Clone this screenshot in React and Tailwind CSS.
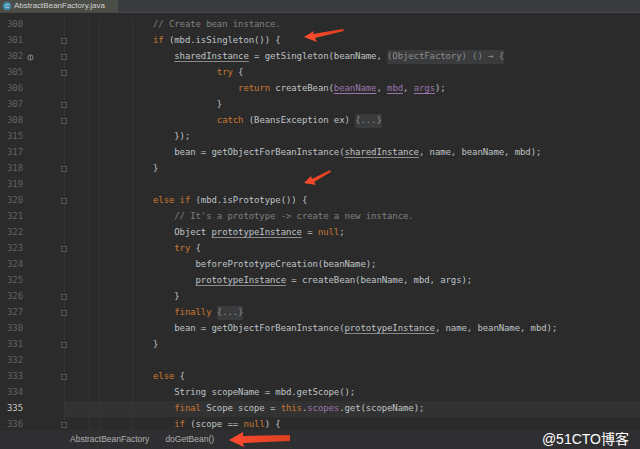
import React from 'react';

const K = 'text-[#cc7832]';
const C = 'text-[#808080]';
const P = 'text-[#9876aa]';

// segment helpers: [text, className]
const t = (s) => [s, ''];
const kw = (s) => [s, K];
const cm = (s) => [s, C];
const ul = (s) => [s, 'underline decoration-[#8a8a8a] underline-offset-2'];
const cap = (s) => [s, P + ' underline decoration-[#9876aa] underline-offset-2'];
const fold = (s) => [s, 'bg-[#3a3b3c] text-[#8c8c8c] rounded-[1px]'];

const lines = [
  { n: 300, ind: 0, segs: [cm('// Create bean instance.')] },
  { n: 301, ind: 0, fold: true, segs: [kw('if'), t(' (mbd.isSingleton()) {')] },
  { n: 302, ind: 4, fold: true, mark: true, segs: [ul('sharedInstance'), t(' = getSingleton(beanName, '), fold('(ObjectFactory) () → {')] },
  { n: 305, ind: 12, fold: true, segs: [kw('try'), t(' {')] },
  { n: 306, ind: 16, segs: [kw('return'), t(' createBean('), cap('beanName'), t(', '), cap('mbd'), t(', '), cap('args'), t(');')] },
  { n: 307, ind: 12, fold: true, segs: [t('}')] },
  { n: 308, ind: 12, fold: true, segs: [kw('catch'), t(' (BeansException ex) '), fold('{...}')] },
  { n: 315, ind: 4, segs: [t('});')] },
  { n: 317, ind: 4, segs: [t('bean = getObjectForBeanInstance('), ul('sharedInstance'), t(', name, beanName, mbd);')] },
  { n: 318, ind: 0, fold: true, segs: [t('}')] },
  { n: 319, ind: 0, segs: [] },
  { n: 320, ind: 0, fold: true, segs: [kw('else if'), t(' (mbd.isPrototype()) {')] },
  { n: 321, ind: 4, segs: [cm("// It's a prototype -> create a new instance.")] },
  { n: 322, ind: 4, segs: [t('Object '), ul('prototypeInstance'), t(' = '), kw('null'), t(';')] },
  { n: 323, ind: 4, fold: true, segs: [kw('try'), t(' {')] },
  { n: 324, ind: 8, segs: [t('beforePrototypeCreation(beanName);')] },
  { n: 325, ind: 8, segs: [ul('prototypeInstance'), t(' = createBean(beanName, mbd, args);')] },
  { n: 326, ind: 4, fold: true, segs: [t('}')] },
  { n: 327, ind: 4, fold: true, segs: [kw('finally'), t(' '), fold('{...}')] },
  { n: 330, ind: 4, segs: [t('bean = getObjectForBeanInstance('), ul('prototypeInstance'), t(', name, beanName, mbd);')] },
  { n: 331, ind: 0, fold: true, segs: [t('}')] },
  { n: 332, ind: 0, segs: [] },
  { n: 333, ind: 0, fold: true, segs: [kw('else'), t(' {')] },
  { n: 334, ind: 4, segs: [t('String scopeName = mbd.getScope();')] },
  { n: 335, ind: 4, cur: true, segs: [kw('final'), t(' Scope scope = '), kw('this'), t('.'), [ 'scopes', P ], t('.get(scopeName);')] },
  { n: 336, ind: 4, fold: true, segs: [kw('if'), t(' (scope == '), kw('null'), t(') {')] },
];

const Row = ({ line }) => (
  <div className="flex h-[16px] items-center">
    <div className="flex h-full w-[65px] items-center border-r border-[#343536] pl-[7px]">
      <span className={line.cur ? 'text-[#c8c8c8]' : 'text-[#5f6366]'}>{line.n}</span>
      {line.mark && (
        <svg width="7" height="7" viewBox="0 0 7 7" className="ml-[4px]">
          <circle cx="3.5" cy="3.5" r="2.6" fill="none" stroke="#8a8a8a" strokeWidth="1" />
          <path d="M3.5 1.5v4" stroke="#8a8a8a" strokeWidth="0.8" />
        </svg>
      )}
      {line.fold && (
        <span className="ml-auto mr-[-3px] h-[6px] w-[6px] border border-[#4f5153] bg-[#2d2d2d]" />
      )}
    </div>
    <div className={`h-full w-[25px] border-r border-[#343536] ${line.cur ? 'bg-[#323232]' : ''}`} />
    <div className={`h-full w-[10px] border-r border-[#343536] ${line.cur ? 'bg-[#323232]' : ''}`} />
    <div className={`h-full w-[33px] border-r border-[#343536] ${line.cur ? 'bg-[#323232]' : ''}`} />
    <div
      className={`flex h-full flex-1 items-center whitespace-pre pl-[20px] text-[#bfc3c7] ${line.cur ? 'bg-[#323232]' : ''}`}
    >
      <span style={{ width: line.ind * 5.32 }} className="shrink-0" />
      {line.segs.map(([s, cls], i) => (
        <span key={i} className={cls}>{s}</span>
      ))}
    </div>
  </div>
);

const Arrows = () => (
  <svg className="pointer-events-none absolute inset-0" width="640" height="449" viewBox="0 0 640 449">
    <defs>
      <linearGradient id="ar" x1="0" x2="1" y1="0" y2="0">
        <stop offset="0" stopColor="#ff4b2e" />
        <stop offset="1" stopColor="#d9401f" />
      </linearGradient>
    </defs>
    <path d="M304 37 L314 31 L313 34 L343 29 L344 31 L315 38 L317 42 Z" fill="url(#ar)" />
    <path d="M304 183 L311 176 L312 179 L330 170 L331 172 L314 182 L316 185 Z" fill="url(#ar)" />
    <path d="M229 440 L243 432 L243 436 L290 435 L290 441 L243 443 L244 447 Z" fill="url(#ar)" />
  </svg>
);

export default function App() {
  return (
    <div
      className="relative flex h-[449px] w-[640px] flex-col overflow-hidden bg-[#2b2b2b] text-[9px] tracking-[-0.1px]"
      style={{ fontFamily: '"DejaVu Sans Mono", "Liberation Mono", monospace' }}
    >
      <div className="flex h-[13px] shrink-0 items-stretch border-b border-[#45474a] bg-[#393b3f]">
        <div className="flex w-[118px] items-center gap-[3px] bg-[#4b4d47] pl-[3px]">
          <span className="flex h-[8px] w-[8px] items-center justify-center rounded-full bg-[#3d8fb5] text-[6px] leading-none text-[#e0e0e0]" style={{ fontFamily: '"Liberation Sans", sans-serif' }}>
            C
          </span>
          <span className="text-[8px] tracking-normal text-[#d0d0d0]" style={{ fontFamily: '"Liberation Sans", sans-serif' }}>
            AbstractBeanFactory.java
          </span>
        </div>
      </div>
      <div className="flex flex-1 flex-col pt-[4px]">
        {lines.map((l) => (
          <Row key={l.n} line={l} />
        ))}
      </div>
      <div
        className="absolute bottom-0 left-0 right-0 flex h-[19px] items-center bg-[#2f2f31] pl-[70px] text-[8.5px] tracking-normal text-[#b0b0b0]"
        style={{ fontFamily: '"Liberation Sans", sans-serif' }}
      >
        <span>AbstractBeanFactory</span>
        <span className="ml-[16px]">doGetBean()</span>
        <span
          className="ml-auto mr-[11px] text-[14px] text-white"
          style={{ fontFamily: '"Liberation Sans", "Noto Sans CJK SC", sans-serif' }}
        >
          @51CTO博客
        </span>
      </div>
      <Arrows />
    </div>
  );
}
